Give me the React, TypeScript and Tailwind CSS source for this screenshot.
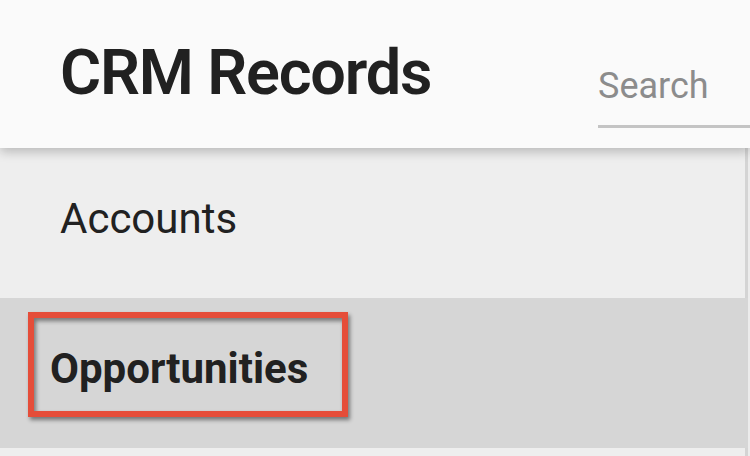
import React from "react";

const rows = [
  { id: "accounts", label: "Accounts", selected: false },
  { id: "opportunities", label: "Opportunities", selected: true },
];

export default function App() {
  return (
    <div className="w-[750px] h-[456px] overflow-hidden bg-[#ececec] flex flex-col font-['Roboto',sans-serif] text-[#212121]">
      {/* Header */}
      <header className="relative z-10 h-[148px] shrink-0 bg-[#fafafa] shadow-[0_4px_10px_rgba(0,0,0,0.22)] flex items-start">
        <h1 className="pl-[60px] pt-[41px] text-[63px] leading-none font-semibold tracking-[-1.2px]">CRM Records</h1>
        <div className="ml-auto w-[152px] pt-[68px]">
          <div className="text-[36px] leading-none text-[#8c8c8c] pb-[21px]">Search</div>
          <div className="h-[3px] bg-[#c4c4c4]" />
        </div>
      </header>

      {/* Record types */}
      <nav className="w-[748px] flex-1 flex flex-col">
        {rows.map((row) =>
          row.selected ? (
            <div key={row.id} className="h-[150px] shrink-0 bg-[#d6d6d6] pl-[28px] pt-[14px]">
              <div className="inline-block border-[6px] border-[#e54d39] pl-[16px] pr-[34px] pt-[30px] pb-[21px] shadow-[2px_3px_4px_rgba(0,0,0,0.45),inset_2px_3px_4px_rgba(0,0,0,0.45)]">
                <span className="text-[42px] leading-none font-bold">{row.label}</span>
              </div>
            </div>
          ) : (
            <div key={row.id} className="h-[150px] shrink-0 bg-[#eeeeee] border-r-[3px] border-[#d4d4d4] pl-[60px] pt-[50px]">
              <span className="text-[42px] leading-none">{row.label}</span>
            </div>
          )
        )}
        <div className="flex-1 bg-[#eeeeee] border-r-[3px] border-[#d4d4d4]" />
      </nav>
    </div>
  );
}
